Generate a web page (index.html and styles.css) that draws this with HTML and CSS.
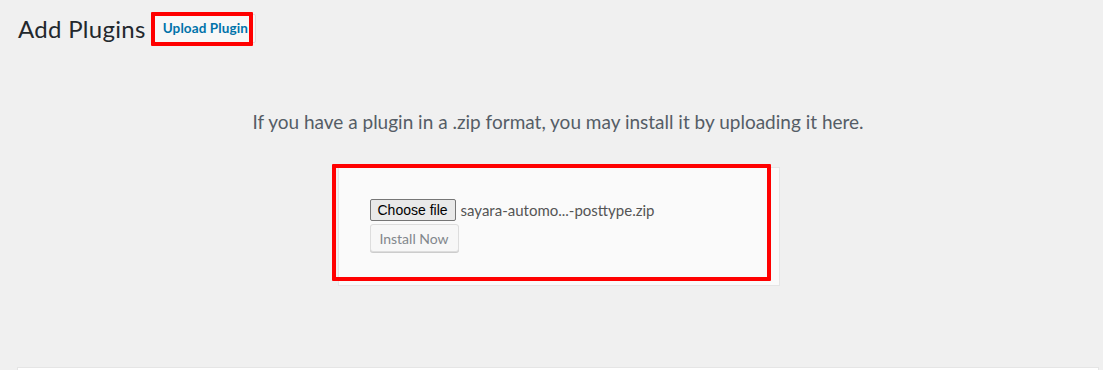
FILE: index.html
```html
<!DOCTYPE html>
<html lang="en">
<head>
  <meta charset="UTF-8" />
  <title>Add Plugins</title>
  <link rel="stylesheet" href="styles.css">
</head>
<body>
  <div class="wrap">
    <div class="page-head">
      <h1>Add Plugins</h1>
      <span class="title-action">Upload Plugin<span class="mark mark-action"></span></span>
    </div>

    <div class="upload-plugin">
      <p class="install-help">If you have a plugin in a .zip format, you may install it by uploading it here.</p>
      <form class="upload-form">
        <div class="file-row">
          <button type="button" class="choose-btn">Choose file</button>
          <span class="file-name">sayara-automo...-posttype.zip</span>
        </div>
        <button type="button" class="install-btn" disabled>Install Now</button>
        <span class="mark mark-form"></span>
      </form>
    </div>

    <div class="panel"></div>
  </div>
</body>
</html>
```

FILE: styles.css
```css
body { margin: 0; background: #f0f0f0; font-family: 'Lato', 'Open Sans', sans-serif; color: #444; }
.wrap { padding: 0 4px 0 17px; }
.page-head { display: flex; align-items: center; padding-top: 14px; }
.page-head h1 { margin: 0 0 0 1px; font-size: 24px; font-weight: 400; letter-spacing: 0.3px; line-height: 29px; color: #23282d; }
.title-action { position: relative; margin-left: 8px; padding: 6px 7px 6px 8px; border: 1px solid #ddd; border-radius: 2px; background: #f7f7f7; color: #0073aa; font-size: 13.5px; font-weight: 700; letter-spacing: 0.1px; line-height: 15px; }
.mark { position: absolute; border: 4px solid #ff0000; border-radius: 1px; box-sizing: border-box; }
.mark-action { left: -4px; top: -3px; width: 102px; height: 34px; }
.upload-plugin { text-align: center; padding-top: 67px; }
.install-help { margin: 0 0 33px; font-size: 19px; line-height: 24px; color: #555d66; }
.upload-form { position: relative; display: inline-block; box-sizing: border-box; width: 442px; height: 119px; padding: 31px 31px 0; margin-left: 1px; text-align: left; background: #fafafa; border: 1px solid #e5e5e5; }
.file-row { display: flex; align-items: center; gap: 5px; }
.choose-btn { font-family: 'Liberation Sans', Arial, sans-serif; font-size: 14px; height: 22px; padding: 0 7px; margin: 0; color: #000; background: #e9e9e9; border: 1px solid #767676; border-radius: 2px; }
.file-name { font-size: 15px; color: #555; }
.install-btn { display: block; margin-top: 3px; width: 89px; height: 28px; font-family: inherit; font-size: 14px; color: #82878c; background: #f7f7f7; border: 1px solid #ddd; border-radius: 3px; box-shadow: 0 1px 0 #ccc; }
.mark-form { left: -7px; top: -4px; width: 439px; height: 117px; }
.panel { margin-top: 81px; height: 10px; background: #fff; border: 1px solid #e5e5e5; border-bottom: 0; }
```
